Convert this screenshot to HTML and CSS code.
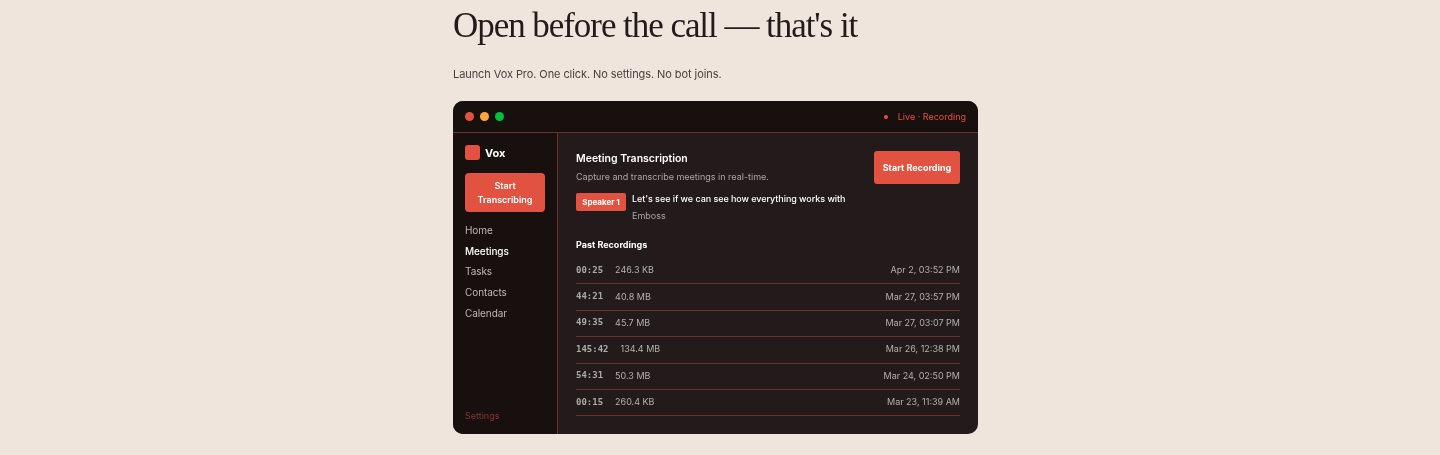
FILE: index.html
```html
<!DOCTYPE html>
<html lang="en">
<head>
<meta charset="utf-8">
<title>Open before the call</title>
<link rel="stylesheet" href="styles.css">
</head>
<body>
<section class="page">
  <h1 class="title">Open before the call — that's it</h1>
  <p class="lead">Launch Vox Pro. One click. No settings. No bot joins.</p>
  <div class="window">
    <header class="titlebar">
      <div class="lights"><span class="light red"></span><span class="light amber"></span><span class="light green"></span></div>
      <div class="live"><span class="live-dot"></span><span>Live · Recording</span></div>
    </header>
    <div class="body">
      <aside class="sidebar">
        <div class="brand"><span class="brand-mark"></span><span>Vox</span></div>
        <div class="side-btn">Start Transcribing</div>
        <nav class="nav">
          <a>Home</a>
          <a class="active">Meetings</a>
          <a>Tasks</a>
          <a>Contacts</a>
          <a>Calendar</a>
        </nav>
        <div class="settings">Settings</div>
      </aside>
      <main class="main">
        <div class="top">
          <div class="intro">
            <h2>Meeting Transcription</h2>
            <p class="sub">Capture and transcribe meetings in real-time.</p>
            <div class="speech">
              <span class="speaker">Speaker 1</span>
              <div class="said">
                <div class="line">Let's see if we can see how everything works with</div>
                <div class="muted">Emboss</div>
              </div>
            </div>
          </div>
          <div class="rec-btn">Start Recording</div>
        </div>
        <h3>Past Recordings</h3>
        <ul class="rows">
          <li><span class="dur">00:25</span><span class="size">246.3 KB</span><span class="date">Apr 2, 03:52 PM</span></li>
          <li><span class="dur">44:21</span><span class="size">40.8 MB</span><span class="date">Mar 27, 03:57 PM</span></li>
          <li><span class="dur">49:35</span><span class="size">45.7 MB</span><span class="date">Mar 27, 03:07 PM</span></li>
          <li><span class="dur">145:42</span><span class="size">134.4 MB</span><span class="date">Mar 26, 12:38 PM</span></li>
          <li><span class="dur">54:31</span><span class="size">50.3 MB</span><span class="date">Mar 24, 02:50 PM</span></li>
          <li><span class="dur">00:15</span><span class="size">260.4 KB</span><span class="date">Mar 23, 11:39 AM</span></li>
        </ul>
      </main>
    </div>
  </div>
</section>
</body>
</html>
```
FILE: styles.css
```css
* { box-sizing: border-box; }
html, body { margin: 0; padding: 0; }
body {
  background: #efe5dc;
  font-family: Inter, "Liberation Sans", sans-serif;
  color: #1a1210;
  height: 455px;
  overflow: hidden;
}
.page { width: 534px; margin: 0 auto; will-change: transform; }
.title {
  margin: 0;
  padding-top: 5px;
  font-family: "Liberation Serif", serif;
  font-weight: 400;
  font-size: 35px;
  line-height: 42px;
  letter-spacing: -1.05px;
  color: #231a1a;
}
.lead {
  margin: 20px 0 0;
  font-size: 11px;
  line-height: 14px;
  letter-spacing: -0.08px;
  color: #4a4040;
}
.window {
  margin-top: 20px;
  width: 525px;
  height: 333px;
  background: #231a1b;
  border-radius: 10px;
  overflow: hidden;
  display: flex;
  flex-direction: column;
}
.titlebar {
  height: 32px;
  flex: none;
  background: #18100e;
  border-bottom: 1px solid #712f2f;
  display: flex;
  align-items: center;
  justify-content: space-between;
  padding: 0 12px;
}
.lights { display: flex; gap: 6px; }
.light { width: 9px; height: 9px; border-radius: 50%; }
.red { background: #e25241; }
.amber { background: #ffa733; }
.green { background: #00c040; }
.live { display: flex; align-items: center; gap: 10px; font-size: 9px; color: #e25241; }
.live-dot { width: 4px; height: 4px; border-radius: 50%; background: #e25241; }
.body { flex: 1; display: flex; min-height: 0; }
.sidebar {
  width: 105px;
  flex: none;
  background: #18100e;
  border-right: 1px solid #712f2f;
  padding: 12px 12px 12px;
  display: flex;
  flex-direction: column;
}
.brand { display: flex; align-items: center; gap: 5px; font-size: 11px; font-weight: 700; color: #fff; height: 15px; }
.brand-mark { width: 15px; height: 15px; border-radius: 3px; background: #e25241; }
.side-btn {
  margin-top: 13px;
  width: 80px;
  height: 39px;
  padding: 0 8px;
  background: #e25241;
  border-radius: 4px;
  color: #fff;
  font-size: 9px;
  font-weight: 600;
  line-height: 14px;
  text-align: center;
  display: flex;
  align-items: center;
  justify-content: center;
}
.nav { margin-top: 8px; display: flex; flex-direction: column; }
.nav a { font-size: 10px; line-height: 20.7px; letter-spacing: -0.08px; color: #bdb9b6; }
.nav a.active { color: #fff; font-weight: 500; }
.settings { margin-top: auto; font-size: 9px; line-height: 12px; color: #843636; }
.main { flex: 1; min-width: 0; padding: 18px 18px 0; }
.top { display: flex; justify-content: space-between; align-items: flex-start; }
.intro { min-width: 0; }
h2 { margin: 1px 0 0; font-size: 10.5px; line-height: 13px; font-weight: 600; color: #fff; }
.sub { margin: 6px 0 0; font-size: 9px; line-height: 12px; color: #a9a6a4; }
.speech { margin-top: 10px; display: flex; align-items: flex-start; gap: 6px; }
.speaker {
  width: 50px;
  height: 18px;
  background: #e25241;
  border-radius: 2px;
  color: #fff;
  font-size: 8px;
  font-weight: 700;
  line-height: 18px;
  text-align: center;
  flex: none;
}
.said { width: 222px; margin-top: -1px; }
.line { font-size: 9px; line-height: 14px; letter-spacing: -0.06px; color: #fff; font-weight: 500; }
.muted { margin-top: 3px; font-size: 9px; line-height: 14px; color: #a9a6a4; }
.rec-btn {
  flex: none;
  width: 86px;
  height: 33px;
  background: #e25241;
  border-radius: 3px;
  color: #fff;
  font-size: 9px;
  font-weight: 700;
  display: flex;
  align-items: center;
  justify-content: center;
}
h3 { margin: 16px 0 0; font-size: 9px; line-height: 12px; font-weight: 700; color: #fff; }
.rows { list-style: none; margin: 7px 0 0; padding: 0; }
.rows li {
  height: 26.4px;
  padding-bottom: 2px;
  display: flex;
  align-items: center;
  border-bottom: 1px solid #712f2f;
  font-size: 9px;
  color: #b2b2af;
}
.dur { font-family: "DejaVu Sans Mono", monospace; font-weight: 700; font-size: 9px; margin-right: 12px; color: #a9acaa; }
.date { margin-left: auto; }
```
